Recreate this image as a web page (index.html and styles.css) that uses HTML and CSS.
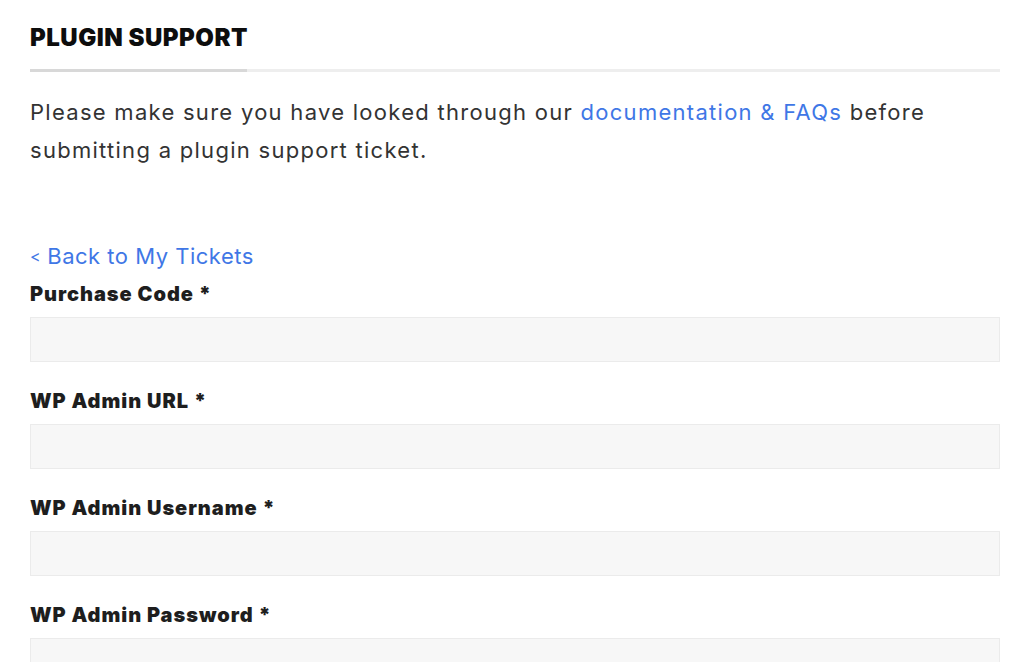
FILE: index.html
```html
<!DOCTYPE html>
<html lang="en">
<head>
<meta charset="utf-8">
<title>Plugin Support</title>
<link rel="stylesheet" href="styles.css">
</head>
<body>
<main class="page">
  <h2 class="title">PLUGIN SUPPORT</h2>
  <div class="rule"><span class="rule-accent"></span></div>
  <p class="intro">Please make sure you have looked through our <a class="link" href="#">documentation &amp; FAQs</a> before submitting a plugin support ticket.</p>
  <a class="back link" href="#"><span class="chev">&lt;</span> Back to My Tickets</a>
  <form class="form">
    <label class="field">
      <span class="label">Purchase Code *</span>
      <input class="input" type="text">
    </label>
    <label class="field">
      <span class="label">WP Admin URL *</span>
      <input class="input" type="text">
    </label>
    <label class="field">
      <span class="label">WP Admin Username *</span>
      <input class="input" type="text">
    </label>
    <label class="field">
      <span class="label">WP Admin Password *</span>
      <input class="input" type="password">
    </label>
  </form>
</main>
</body>
</html>
```
FILE: styles.css
```css
html, body {
  margin: 0;
  padding: 0;
  background: #fff;
}
body {
  font-family: Inter, "Open Sans", sans-serif;
  color: #333;
}
.page {
  width: 970px;
  padding: 0 24px 0 30px;
  display: flex;
  flex-direction: column;
}
.title {
  margin: 22px 0 0;
  font-size: 24px;
  line-height: 32px;
  font-weight: 900;
  color: #0d0d0d;
  letter-spacing: 0.5px;
}
.rule {
  margin-top: 15px;
  height: 3px;
  background: #eeeeee;
  display: flex;
}
.rule-accent {
  width: 217px;
  background: #d8d8d8;
}
.intro {
  margin: 21px 0 0;
  font-size: 22px;
  line-height: 38px;
  font-weight: 400;
  color: #333;
  letter-spacing: 1.28px;
}
.link {
  color: #3f77e6;
  text-decoration: none;
}
.back {
  margin-top: 72px;
  font-size: 22px;
  line-height: 30px;
  align-self: flex-start;
  letter-spacing: 0.5px;
}
.chev {
  font-size: 16px;
  letter-spacing: 0;
  vertical-align: 2px;
}
.form {
  margin-top: 10px;
  display: flex;
  flex-direction: column;
}
.field {
  display: flex;
  flex-direction: column;
  margin-bottom: 26px;
}
.label {
  font-size: 20px;
  line-height: 26px;
  font-weight: 900;
  color: #1e1e1e;
  letter-spacing: 0.95px;
  margin-bottom: 10px;
}
.input {
  box-sizing: border-box;
  height: 45px;
  width: 100%;
  margin: 0;
  border: 1px solid #ebebeb;
  background: #f7f7f7;
  font: inherit;
  padding: 0 12px;
  outline: none;
}
```
